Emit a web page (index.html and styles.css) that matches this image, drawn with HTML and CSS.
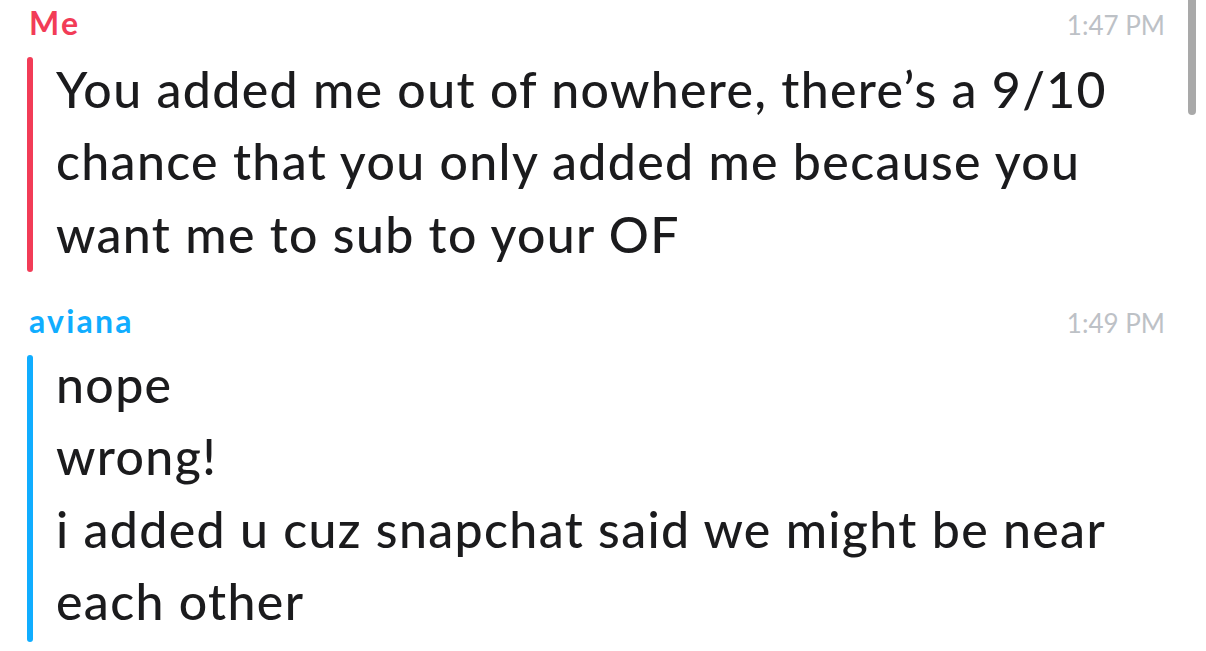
FILE: index.html
```html
<!DOCTYPE html>
<html lang="en">
<head>
<meta charset="utf-8">
<title>Chat</title>
<link rel="stylesheet" href="styles.css">
</head>
<body>
<div class="scrollbar"></div>
<main class="thread">
  <section class="msg msg-me">
    <header class="msg-head">
      <span class="name">Me</span>
      <span class="time">1:47 PM</span>
    </header>
    <div class="msg-body">
      <div class="bar"></div>
      <div class="text">
        <p>You added me out of nowhere, there’s a 9/10 chance that you only added me because you want me to sub to your OF</p>
      </div>
    </div>
  </section>
  <section class="msg msg-them">
    <header class="msg-head">
      <span class="name">aviana</span>
      <span class="time">1:49 PM</span>
    </header>
    <div class="msg-body">
      <div class="bar"></div>
      <div class="text">
        <p>nope</p>
        <p>wrong!</p>
        <p>i added u cuz snapchat said we might be near each other</p>
      </div>
    </div>
  </section>
</main>
</body>
</html>
```
FILE: styles.css
```css
html, body {
  margin: 0;
  padding: 0;
  background: #ffffff;
}
body {
  width: 1206px;
  height: 651px;
  overflow: hidden;
  position: relative;
  font-family: "Lato", "Noto Sans", sans-serif;
}
.scrollbar {
  position: absolute;
  top: -6px;
  left: 1188px;
  width: 8px;
  height: 121px;
  border-radius: 4px;
  background: #a9a9a9;
}
.thread {
  padding: 0 41px 0 27px;
}
.msg-head {
  display: flex;
  justify-content: space-between;
  align-items: baseline;
  height: 42px;
  padding-top: 4px;
}
.name {
  margin-left: 2px;
  font-size: 32px;
  font-weight: 700;
  letter-spacing: 2.2px;
  line-height: 38px;
}
.time {
  font-size: 26px;
  line-height: 38px;
  color: #bdc1c6;
}
.msg-me .name { color: #f23c57; }
.msg-them .name { color: #10adff; }
.msg-me .bar { background: #f23c57; }
.msg-them .bar { background: #10adff; }
.msg-body {
  display: flex;
  margin-top: 6.5px;
}
.bar {
  flex: none;
  width: 6px;
  border-radius: 3px;
  margin: 4.5px 0 -2px;
}
.text {
  margin-left: 23px;
  font-size: 50px;
  font-weight: 500;
  letter-spacing: 1.35px;
  line-height: 72.5px;
  color: #1b1b1d;
}
.text p {
  margin: 0;
}
.msg-them {
  margin-top: 28px;
}
.msg-them .msg-body {
  margin-top: 3.5px;
}
.msg-them .bar {
  margin: 7.5px 0 -4.5px;
}
```
